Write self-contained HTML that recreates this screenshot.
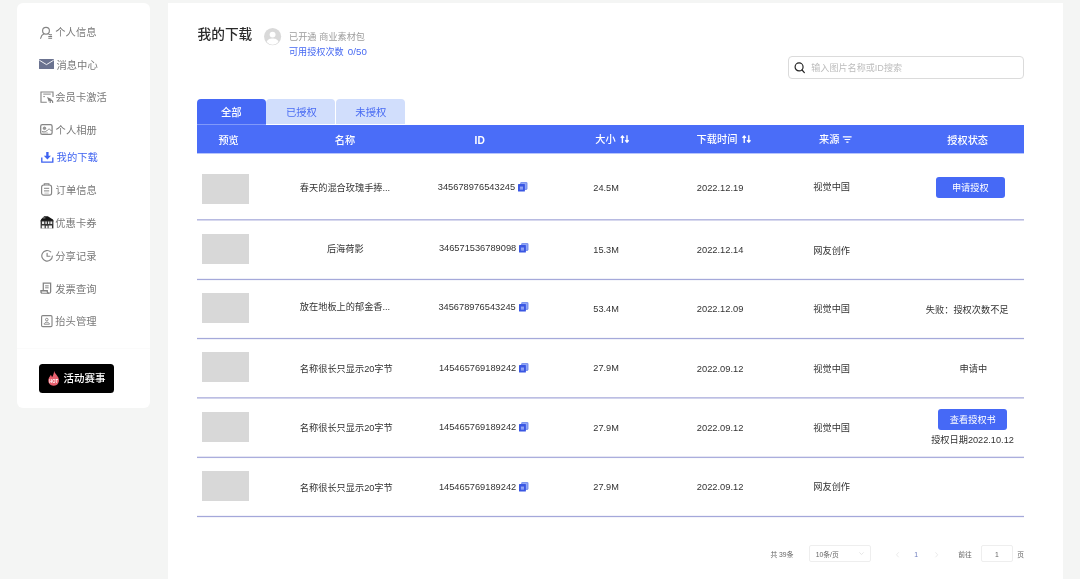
<!DOCTYPE html>
<html lang="zh-CN">
<head>
<meta charset="utf-8">
<title>我的下载</title>
<style>
*{box-sizing:border-box;margin:0;padding:0}
html,body{width:1080px;height:579px;overflow:hidden;background:#f4f5f4}
body{position:relative;font-family:"Liberation Sans","Noto Sans CJK SC",sans-serif;color:#333;-webkit-font-smoothing:antialiased}
.t{position:absolute;white-space:nowrap;line-height:14px;height:14px}
#side{position:absolute;left:17px;top:3px;width:133px;height:405.4px;background:#fff;border-radius:6px}
#side .sep{position:absolute;left:0;right:0;top:345px;height:1px;background:#fbfbfb}
.nav{position:absolute;left:55.5px;font-size:10.3px;line-height:14px;height:14px;color:#787878;white-space:nowrap}
.nav.on{color:#3f63f1}
.ico{position:absolute;overflow:visible}
#act{position:absolute;left:39px;top:364px;width:75.4px;height:29.4px;background:#000;border-radius:3.5px}
#act span{position:absolute;left:24.6px;top:6.8px;font-size:10.5px;line-height:14px;color:#fff;font-weight:500;white-space:nowrap}
#main{position:absolute;left:168px;top:3px;width:895px;height:580px;background:#fff}
#title{left:197.5px;top:24.8px;font-size:13.7px;line-height:20px;height:20px;font-weight:500;color:#2b2b2b}
.sub1{left:289px;top:30.3px;font-size:9.15px;color:#9c9c9c;word-spacing:0.4px}
.sub2{left:289px;top:45px;font-size:9.1px;color:#4669f2;word-spacing:1.6px}
.sub2 b{font-weight:400;font-size:9.7px;letter-spacing:0.1px}
#search{position:absolute;left:788px;top:56px;width:236px;height:23px;border:1px solid #dbdbdb;border-radius:4px;background:#fff}
#search span{position:absolute;left:22.2px;top:3.6px;font-size:9.1px;line-height:14px;color:#bdbdbd;white-space:nowrap}
.tab{position:absolute;top:99px;height:25px;width:68.5px;background:#d1defc;border-radius:4px 4px 0 0;font-size:10.3px;line-height:27.4px;text-align:center;color:#4a6cf3}
.tab.on{background:#4669f6;color:#fff;font-weight:500}
#thead{position:absolute;left:197px;top:125px;width:827px;height:28px;background:#4a6df8}
#thead:before{content:"";position:absolute;left:0;top:-1px;width:69px;height:1px;background:rgba(74,109,248,.7)}
#thead:after{content:"";position:absolute;left:0;bottom:-1px;width:100%;height:1px;background:rgba(74,109,248,.4)}
.th{position:absolute;top:133.6px;font-size:10.2px;line-height:14px;height:14px;color:#fff;font-weight:500;white-space:nowrap;transform:translateX(-50%)}
.line{position:absolute;left:197px;width:827px;height:1px;background:#a9b7f1}
.thumb{position:absolute;left:202px;width:47px;height:30px;background:#d8d8d8}
.c{position:absolute;font-size:9.2px;line-height:14px;height:14px;color:#333;white-space:nowrap}
.num{font-size:9.28px}
.num2{font-size:9.3px}
.cc{transform:translateX(-50%)}
.btn{position:absolute;height:21px;background:#4669f6;border-radius:3px;color:#fff;font-size:9.2px;line-height:22.5px;text-align:center;white-space:nowrap}
.cp{position:absolute;width:10px;height:10px}
.p{position:absolute;font-size:6.8px;line-height:10px;height:10px;color:#666;white-space:nowrap}
.pbox{position:absolute;top:544.6px;height:17.7px;border:1px solid #eeeeee;border-radius:2px;background:#fff}
#wrap{position:absolute;left:0;top:0;width:1080px;height:579px;will-change:transform}
</style>
</head>
<body>
<div id="wrap">
<div id="side"><div class="sep"></div></div>
<div id="main"></div>
<!-- sidebar -->
<!-- 1 person -->
<svg class="ico" style="left:40px;top:25.6px" width="13" height="13" viewBox="0 0 13 13" fill="none" stroke="#858585" stroke-width="1.15" stroke-linecap="round">
  <circle cx="6" cy="4.7" r="3.4"/>
  <path d="M4.1 7.8C2.3 8.5 1.1 10.1 0.6 12.3"/>
  <path d="M7.9 7.8C8.6 8 9.2 8.3 9.8 8.7" stroke-width="1"/>
  <path d="M9.9 8.8H12M8.3 10.5H12.1M8.3 12.2H12.1" stroke="#7a7a7a" stroke-width="1.1" stroke-linecap="butt"/>
</svg>
<div class="nav" style="left:55.3px;top:25.5px">个人信息</div>
<!-- 2 envelope -->
<svg class="ico" style="left:39px;top:59px" width="15" height="10" viewBox="0 0 15 10">
  <rect x="0" y="0" width="15" height="10" rx="0.6" fill="#6b7390"/>
  <path d="M0.3 1.2L7.5 5.6L14.7 1.2" fill="none" stroke="#fff" stroke-width="0.9"/>
</svg>
<div class="nav" style="left:56.5px;top:58.7px">消息中心</div>
<!-- 3 card -->
<svg class="ico" style="left:39.6px;top:90.5px" width="13.8" height="12.2" viewBox="0 0 14 12.6" preserveAspectRatio="none" fill="none" stroke="#858585" stroke-width="1.15">
  <path d="M6.9 11.6H1V1H13.2V6.3"/>
  <path d="M3.3 3.2H10.9" stroke-width="1"/>
  <path d="M3.3 5.8H5" stroke-width="1"/>
  <path d="M7.2 6.3L12.2 8.4L10.4 9.2L10.6 9.4C12 9 13.4 9.6 13.4 11V12.4H12.3V11.2C12.3 10.4 11.6 10.2 10.9 10.4V12.4H9.8V9.8L8.9 11.2Z" fill="#7d7d7d" stroke="none"/>
</svg>
<div class="nav" style="left:55.3px;top:91px">会员卡激活</div>
<!-- 4 image -->
<svg class="ico" style="left:40px;top:124px" width="12.8" height="11" viewBox="0 0 12.8 11" fill="none" stroke="#858585" stroke-width="1.25">
  <rect x="0.7" y="0.7" width="11.4" height="9.6" rx="1.6"/>
  <circle cx="4.5" cy="4.3" r="1.3" fill="#9a9a9a" stroke-width="0.8"/>
  <path d="M2 7.6C3.6 7.8 5.4 8 6.8 6.8C7.8 5.8 8.6 4.8 9.6 5.2C10.4 5.6 10.9 6.4 11.6 7" stroke-width="1"/>
  <path d="M2.4 9H8" stroke-width="0.8" stroke="#a5a5a5"/>
</svg>
<div class="nav" style="left:55.6px;top:123.8px">个人相册</div>
<!-- 5 download -->
<svg class="ico" style="left:40.6px;top:151.6px" width="12.6" height="11" viewBox="0 0 12.8 11.4" preserveAspectRatio="none" fill="none" stroke="#3f63f1" stroke-width="1.35">
  <path d="M0.8 5.6V10.5H12V5.6"/>
  <path d="M6.5 0V4.6" stroke-width="2.4"/>
  <path d="M2.9 4H10.1L6.5 7.9Z" fill="#3f63f1" stroke="none"/>
</svg>
<div class="nav on" style="left:56.6px;top:151px">我的下载</div>
<!-- 6 clipboard -->
<svg class="ico" style="left:41px;top:183.2px" width="11.2" height="12.8" viewBox="0 0 11.2 12.8" fill="none" stroke="#858585" stroke-width="1.15">
  <rect x="0.6" y="2" width="10" height="10.2" rx="2.2"/>
  <path d="M3.3 2.3V0.7H7.9V2.3" stroke-width="1.1"/>
  <path d="M3 5.3H8.2M3 7.9H8.2" stroke-width="1"/>
  <path d="M3.4 10.1H7.8" stroke-width="0.7" stroke="#aaa"/>
</svg>
<div class="nav" style="left:55.6px;top:183.7px">订单信息</div>
<!-- 7 shop -->
<svg class="ico" style="left:39.7px;top:216.2px" width="14" height="12.6" viewBox="0 0 14 12.6">
  <path d="M1.2 3.2L4.2 0.3H7.8L13 3.4L13.7 5.2H0.3Z" fill="#151515"/>
  <path d="M0.6 4.6H13.4V12.4H0.6Z" fill="#333"/>
  <path d="M2 5.6H4.2V8H2ZM5.4 5.6H6.8V8H5.4ZM8 5.6H9.4V8H8ZM10.4 5.6H12.2V8H10.4Z" fill="#e8e8e8"/>
  <path d="M1.8 9.4H4.6V12.4H1.8ZM5.8 9.8H7.6V12.4H5.8ZM8.6 9.4H12V12.4H8.6Z" fill="#f4f4f4"/>
  <path d="M2.8 1.9H5.4" stroke="#ddd" stroke-width="0.6"/>
</svg>
<div class="nav" style="left:55.3px;top:217px">优惠卡券</div>
<!-- 8 clock -->
<svg class="ico" style="left:40.8px;top:250px" width="12.2" height="12" viewBox="0 0 12.2 12" fill="none" stroke="#858585" stroke-width="1.15" stroke-linecap="round">
  <path d="M9.7 1.9A5.3 5.3 0 1 0 11.4 6"/>
  <path d="M6.1 3.2V6.3H8.9"/>
</svg>
<div class="nav" style="left:55.3px;top:250px">分享记录</div>
<!-- 9 invoice -->
<svg class="ico" style="left:40.4px;top:282.4px" width="11.6" height="12" viewBox="0 0 12 12.8" preserveAspectRatio="none" fill="none" stroke="#828282" stroke-width="1.3">
  <path d="M3.4 8.9V1.3H11V10.4C11 11.5 10.3 12 9.4 12H2.6"/>
  <path d="M2.6 12C1.5 12 1 11.4 1 10.4V9.3H7.5V10.5C7.5 11.5 8.2 12 9.2 12" stroke-width="1.4"/>
  <path d="M5.3 4.1H9M5.3 6.2H9" stroke-width="1"/>
</svg>
<div class="nav" style="left:55.3px;top:282.8px">发票查询</div>
<!-- 10 square person -->
<svg class="ico" style="left:40.8px;top:314.8px" width="11.6" height="12.2" viewBox="0 0 11.8 12.2" preserveAspectRatio="none" fill="none" stroke="#858585" stroke-width="1.15">
  <rect x="0.6" y="0.6" width="10.6" height="11" rx="1.2"/>
  <circle cx="5.9" cy="4.6" r="1.3" stroke-width="0.95"/>
  <path d="M3.2 9.2C3.4 6.6 8.4 6.6 8.6 9.2Z" stroke-width="0.95"/>
</svg>
<div class="nav" style="left:55.3px;top:315.3px">抬头管理</div>
<!-- activity button -->
<div id="act">
  <svg class="ico" style="left:9px;top:6.9px" width="11.4" height="14.8" viewBox="0 0 11.6 13" preserveAspectRatio="none">
    <path d="M6.2 0C6.8 2.2 9.4 3.6 10.6 6C12.2 9.2 10.4 13 5.8 13C1.2 13 -0.6 9.4 0.8 6.4C1.4 5.2 2.4 4.6 2.8 3.4C3.6 4 4 4.8 4 5.6C5 4.4 6.2 2.2 6.2 0Z" fill="#e9606e"/>
    <text x="5.8" y="10.4" font-size="4.2" font-weight="700" fill="#fff" text-anchor="middle" font-family="Liberation Sans, sans-serif">HOT</text>
  </svg>
  <span>活动赛事</span>
</div>

<!-- header -->
<div class="t" id="title">我的下载</div>
<svg class="ico" style="left:264px;top:27.6px" width="17.2" height="17.2" viewBox="0 0 18 18">
  <circle cx="9" cy="9" r="9" fill="#d9d9d9"/>
  <circle cx="9" cy="6.9" r="3.1" fill="#fff"/>
  <path d="M2.9 14.6C3.6 11.6 6.2 10.9 9 10.9C11.8 10.9 14.4 11.6 15.1 14.6A8 8 0 0 1 2.9 14.6Z" fill="#fff"/>
</svg>
<div class="t sub1">已开通 商业素材包</div>
<div class="t sub2">可用授权次数 <b>0/50</b></div>
<div id="search">
  <svg class="ico" style="left:5.1px;top:5.2px" width="11.8" height="11.8" viewBox="0 0 13 13" fill="none" stroke="#222" stroke-width="1.3" stroke-linecap="round">
    <circle cx="5.6" cy="5.4" r="4.4"/>
    <path d="M8.9 8.8L11.4 11.6"/>
  </svg>
  <span>输入图片名称或ID搜索</span>
</div>
<div class="tab on" style="left:197px">全部</div>
<div class="tab" style="left:266.2px;padding-left:2px">已授权</div>
<div class="tab" style="left:335.6px;width:69.4px;padding-left:1px">未授权</div>
<div id="thead"></div>
<div class="th" style="left:228.6px">预览</div>
<div class="th" style="left:345px">名称</div>
<div class="th" style="left:479.7px;font-weight:700">ID</div>
<div class="th" style="left:612px;top:132.8px">大小 <svg width="9" height="8" viewBox="0 0 9 8" style="vertical-align:-0.5px;margin-left:1.4px" fill="none" stroke="#fff" stroke-width="1.35"><path d="M2.2 8V1.2M0.5 2.9L2.2 1L3.9 2.9M6.8 0.2V7M5.1 5.3L6.8 7.2L8.5 5.3"/></svg></div>
<div class="th" style="left:723.6px;top:132.8px">下载时间 <svg width="9" height="8" viewBox="0 0 9 8" style="vertical-align:-0.5px;margin-left:1.4px" fill="none" stroke="#fff" stroke-width="1.35"><path d="M2.2 8V1.2M0.5 2.9L2.2 1L3.9 2.9M6.8 0.2V7M5.1 5.3L6.8 7.2L8.5 5.3"/></svg></div>
<div class="th" style="left:835.5px;top:132.8px">来源 <svg width="9.6" height="7" viewBox="0 0 9.6 7" style="vertical-align:0px" fill="none" stroke="#fff" stroke-width="1.2"><path d="M0 0.8H9.6M2 3.5H7.6M3.7 6.1H5.9"/></svg></div>
<div class="th" style="left:967.7px">授权状态</div>

<!-- table -->
<div class="thumb" style="top:173.6px"></div>
<div class="c cc" style="left:345px;top:180.5px">春天的混合玫瑰手捧...</div>
<div class="c num" style="left:437.8px;top:179.9px">345678976543245</div>
<svg class="cp" style="left:517.9px;top:181.8px" viewBox="0 0 10 10"><rect x="2.7" y="0.4" width="6.3" height="7" rx="0.5" fill="#93a8f4" stroke="#5f7cec" stroke-width="0.8"/><rect x="0" y="1.9" width="6.9" height="7.7" rx="0.5" fill="#3a57e3"/><path d="M1.9 5.2H5M1.9 6.9H5" stroke="#dfe6ff" stroke-width="0.8"/></svg>
<div class="c" style="left:593.3px;top:181.0px">24.5M</div>
<div class="c num2" style="left:696.8px;top:180.9px">2022.12.19</div>
<div class="c" style="left:813.3px;top:180.2px">视觉中国</div>
<div class="line" style="top:219px;background:rgb(183,186,225)"></div>
<div class="line" style="top:220px;background:rgb(215,216,238)"></div>
<div class="thumb" style="top:233.8px"></div>
<div class="c cc" style="left:345.3px;top:242.0px">后海荷影</div>
<div class="c num" style="left:438.9px;top:241.4px">346571536789098</div>
<svg class="cp" style="left:519.0px;top:243.3px" viewBox="0 0 10 10"><rect x="2.7" y="0.4" width="6.3" height="7" rx="0.5" fill="#93a8f4" stroke="#5f7cec" stroke-width="0.8"/><rect x="0" y="1.9" width="6.9" height="7.7" rx="0.5" fill="#3a57e3"/><path d="M1.9 5.2H5M1.9 6.9H5" stroke="#dfe6ff" stroke-width="0.8"/></svg>
<div class="c" style="left:593.3px;top:242.6px">15.3M</div>
<div class="c num2" style="left:696.8px;top:242.8px">2022.12.14</div>
<div class="c" style="left:813.3px;top:243.5px">网友创作</div>
<div class="line" style="top:278px;background:rgb(240,241,249)"></div>
<div class="line" style="top:279px;background:rgb(165,169,218)"></div>
<div class="line" style="top:280px;background:rgb(245,246,251)"></div>
<div class="thumb" style="top:293px"></div>
<div class="c cc" style="left:345px;top:300.0px">放在地板上的郁金香...</div>
<div class="c num" style="left:438.4px;top:300.4px">345678976543245</div>
<svg class="cp" style="left:518.5px;top:302.3px" viewBox="0 0 10 10"><rect x="2.7" y="0.4" width="6.3" height="7" rx="0.5" fill="#93a8f4" stroke="#5f7cec" stroke-width="0.8"/><rect x="0" y="1.9" width="6.9" height="7.7" rx="0.5" fill="#3a57e3"/><path d="M1.9 5.2H5M1.9 6.9H5" stroke="#dfe6ff" stroke-width="0.8"/></svg>
<div class="c" style="left:593.3px;top:302.0px">53.4M</div>
<div class="c num2" style="left:696.8px;top:302.3px">2022.12.09</div>
<div class="c" style="left:813.3px;top:302.3px">视觉中国</div>
<div class="line" style="top:337px;background:rgb(245,246,251)"></div>
<div class="line" style="top:338px;background:rgb(165,169,218)"></div>
<div class="line" style="top:339px;background:rgb(240,241,249)"></div>
<div class="thumb" style="top:352.3px"></div>
<div class="c cc" style="left:346.3px;top:361.8px">名称很长只显示20字节</div>
<div class="c num" style="left:438.9px;top:360.8px">145465769189242</div>
<svg class="cp" style="left:519.0px;top:362.7px" viewBox="0 0 10 10"><rect x="2.7" y="0.4" width="6.3" height="7" rx="0.5" fill="#93a8f4" stroke="#5f7cec" stroke-width="0.8"/><rect x="0" y="1.9" width="6.9" height="7.7" rx="0.5" fill="#3a57e3"/><path d="M1.9 5.2H5M1.9 6.9H5" stroke="#dfe6ff" stroke-width="0.8"/></svg>
<div class="c" style="left:593.3px;top:361.3px">27.9M</div>
<div class="c num2" style="left:696.8px;top:361.6px">2022.09.12</div>
<div class="c" style="left:813.3px;top:362.0px">视觉中国</div>
<div class="line" style="top:397px;background:rgb(188,190,227)"></div>
<div class="line" style="top:398px;background:rgb(209,211,236)"></div>
<div class="thumb" style="top:411.6px"></div>
<div class="c cc" style="left:346.3px;top:420.7px">名称很长只显示20字节</div>
<div class="c num" style="left:438.9px;top:420.2px">145465769189242</div>
<svg class="cp" style="left:519.0px;top:422.1px" viewBox="0 0 10 10"><rect x="2.7" y="0.4" width="6.3" height="7" rx="0.5" fill="#93a8f4" stroke="#5f7cec" stroke-width="0.8"/><rect x="0" y="1.9" width="6.9" height="7.7" rx="0.5" fill="#3a57e3"/><path d="M1.9 5.2H5M1.9 6.9H5" stroke="#dfe6ff" stroke-width="0.8"/></svg>
<div class="c" style="left:593.3px;top:421.0px">27.9M</div>
<div class="c num2" style="left:696.8px;top:421.3px">2022.09.12</div>
<div class="c" style="left:813.3px;top:421.0px">视觉中国</div>
<div class="line" style="top:456px;background:rgb(229,230,244)"></div>
<div class="line" style="top:457px;background:rgb(171,174,221)"></div>
<div class="line" style="top:458px;background:rgb(250,251,253)"></div>
<div class="thumb" style="top:471px"></div>
<div class="c cc" style="left:346.3px;top:480.8px">名称很长只显示20字节</div>
<div class="c num" style="left:438.9px;top:479.8px">145465769189242</div>
<svg class="cp" style="left:519.0px;top:481.7px" viewBox="0 0 10 10"><rect x="2.7" y="0.4" width="6.3" height="7" rx="0.5" fill="#93a8f4" stroke="#5f7cec" stroke-width="0.8"/><rect x="0" y="1.9" width="6.9" height="7.7" rx="0.5" fill="#3a57e3"/><path d="M1.9 5.2H5M1.9 6.9H5" stroke="#dfe6ff" stroke-width="0.8"/></svg>
<div class="c" style="left:593.3px;top:480.3px">27.9M</div>
<div class="c num2" style="left:696.8px;top:479.8px">2022.09.12</div>
<div class="c" style="left:813.3px;top:479.6px">网友创作</div>
<div class="line" style="top:515px;background:rgb(243,243,250)"></div>
<div class="line" style="top:516px;background:rgb(164,168,218)"></div>
<div class="line" style="top:517px;background:rgb(243,243,250)"></div>
<div class="btn" style="left:936px;top:177px;width:68.5px">申请授权</div>
<div class="c cc" style="left:967.2px;top:303px">失败：授权次数不足</div>
<div class="c cc" style="left:973.4px;top:361.8px">申请中</div>
<div class="btn" style="left:938.3px;top:409px;width:69px">查看授权书</div>
<div class="c cc" style="left:972.5px;top:433px">授权日期2022.10.12</div>

<!-- pager -->
<div class="p" style="left:770.4px;top:549.5px">共 39条</div>
<div class="pbox" style="left:808.5px;width:62.5px"></div>
<div class="p" style="left:815.7px;top:549.5px">10条/页</div>
<svg class="ico" style="left:858.6px;top:552.4px" width="5" height="3.4" viewBox="0 0 6 4" fill="none" stroke="#dedede" stroke-width="0.9"><path d="M0.4 0.4L3 3L5.6 0.4"/></svg>
<svg class="ico" style="left:896.2px;top:551.6px" width="3.2" height="5.6" viewBox="0 0 4 7" fill="none" stroke="#e2e2e2" stroke-width="0.9"><path d="M3.4 0.4L0.6 3.5L3.4 6.6"/></svg>
<div class="p" style="left:914.3px;top:549.6px;color:#6d7bbd">1</div>
<svg class="ico" style="left:935px;top:551.6px" width="3.2" height="5.6" viewBox="0 0 4 7" fill="none" stroke="#e2e2e2" stroke-width="0.9"><path d="M0.6 0.4L3.4 3.5L0.6 6.6"/></svg>
<div class="p" style="left:958.3px;top:549.5px">前往</div>
<div class="pbox" style="left:981px;width:32px"></div>
<div class="p" style="left:995px;top:549.5px">1</div>
<div class="p" style="left:1017.3px;top:549.5px">页</div>

</div>
</body>
</html>
